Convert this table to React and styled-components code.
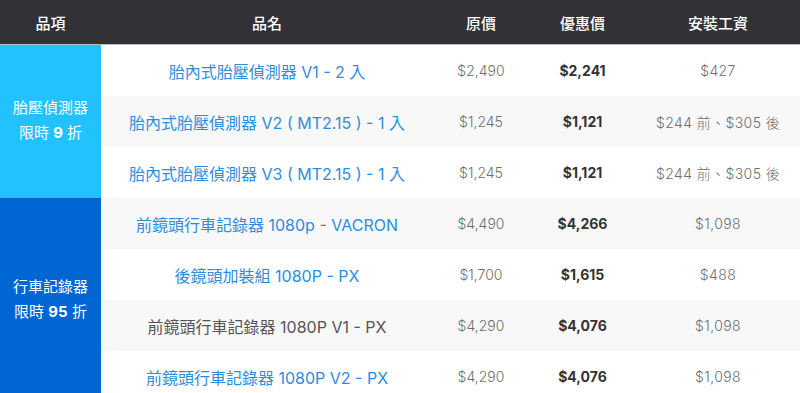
import React from 'react';
import styled, { createGlobalStyle } from 'styled-components';

const GlobalStyle = createGlobalStyle`
  body {
    margin: 0;
    background: #ffffff;
    font-family: 'Inter', 'Noto Sans CJK TC', sans-serif;
  }
`;

const PriceTable = styled.table`
  width: 800px;
  border-collapse: collapse;
  table-layout: fixed;
  font-family: 'Inter', 'Noto Sans CJK TC', sans-serif;
`;

const HeadCell = styled.th`
  height: 44px;
  padding: 0;
  background: #323136;
  color: #ffffff;
  font-size: 15px;
  font-weight: 500;
  text-align: center;
  border-bottom: 1px solid #bcbcbc;
`;

const CategoryCell = styled.td`
  background: ${p => p.$tone === 'dark' ? '#0066d3' : '#22c1ff'};
  color: #ffffff;
  font-size: 15px;
  line-height: 25px;
  text-align: center;
  vertical-align: middle;
  padding: 0 0 2px;
  border-top: ${p => p.$tone === 'dark' ? '1px solid #0f5fb8' : 'none'};
  b {
    font-weight: 700;
  }
`;

const Row = styled.tr`
  background: ${p => p.$shaded ? '#f8f8f8' : '#ffffff'};
`;

const Cell = styled.td`
  height: 51px;
  padding: 0;
  text-align: center;
  vertical-align: middle;
  font-size: 14px;
  font-weight: 300;
  color: #6f6f6f;
`;

const NameCell = styled(Cell)`
  font-size: 16px;
  font-weight: 400;
  color: ${p => p.$plain ? '#555555' : '#2e8ddb'};
`;

const SaleCell = styled(Cell)`
  font-weight: 700;
  color: #333333;
`;

const FeeCell = styled(Cell)`
  letter-spacing: 0.4px;
`;

const groups = [
  {
    tone: 'light',
    label: '胎壓偵測器',
    discount: '9',
    items: [
      { name: '胎內式胎壓偵測器 V1 - 2 入', price: '$2,490', sale: '$2,241', fee: '$427' },
      { name: '胎內式胎壓偵測器 V2 ( MT2.15 ) - 1 入', price: '$1,245', sale: '$1,121', fee: '$244 前、$305 後' },
      { name: '胎內式胎壓偵測器 V3 ( MT2.15 ) - 1 入', price: '$1,245', sale: '$1,121', fee: '$244 前、$305 後' },
    ],
  },
  {
    tone: 'dark',
    label: '行車記錄器',
    discount: '95',
    items: [
      { name: '前鏡頭行車記錄器 1080p - VACRON', price: '$4,490', sale: '$4,266', fee: '$1,098' },
      { name: '後鏡頭加裝組 1080P - PX', price: '$1,700', sale: '$1,615', fee: '$488' },
      { name: '前鏡頭行車記錄器 1080P V1 - PX', price: '$4,290', sale: '$4,076', fee: '$1,098', plain: true },
      { name: '前鏡頭行車記錄器 1080P V2 - PX', price: '$4,290', sale: '$4,076', fee: '$1,098' },
    ],
  },
];

export default function App() {
  let rowIndex = 0;
  return (
    <>
      <GlobalStyle />
      <PriceTable>
        <colgroup>
          <col style={{ width: 101 }} />
          <col style={{ width: 332 }} />
          <col style={{ width: 96 }} />
          <col style={{ width: 107 }} />
          <col style={{ width: 164 }} />
        </colgroup>
        <thead>
          <tr>
            <HeadCell>品項</HeadCell>
            <HeadCell>品名</HeadCell>
            <HeadCell>原價</HeadCell>
            <HeadCell>優惠價</HeadCell>
            <HeadCell>安裝工資</HeadCell>
          </tr>
        </thead>
        <tbody>
          {groups.map(group =>
            group.items.map((item, i) => {
              const shaded = rowIndex % 2 === 1;
              rowIndex += 1;
              return (
                <Row key={item.name + rowIndex} $shaded={shaded}>
                  {i === 0 && (
                    <CategoryCell rowSpan={group.items.length} $tone={group.tone}>
                      {group.label}
                      <br />
                      限時 <b>{group.discount}</b> 折
                    </CategoryCell>
                  )}
                  <NameCell $plain={item.plain}>{item.name}</NameCell>
                  <Cell>{item.price}</Cell>
                  <SaleCell>{item.sale}</SaleCell>
                  <FeeCell>{item.fee}</FeeCell>
                </Row>
              );
            })
          )}
        </tbody>
      </PriceTable>
    </>
  );
}
